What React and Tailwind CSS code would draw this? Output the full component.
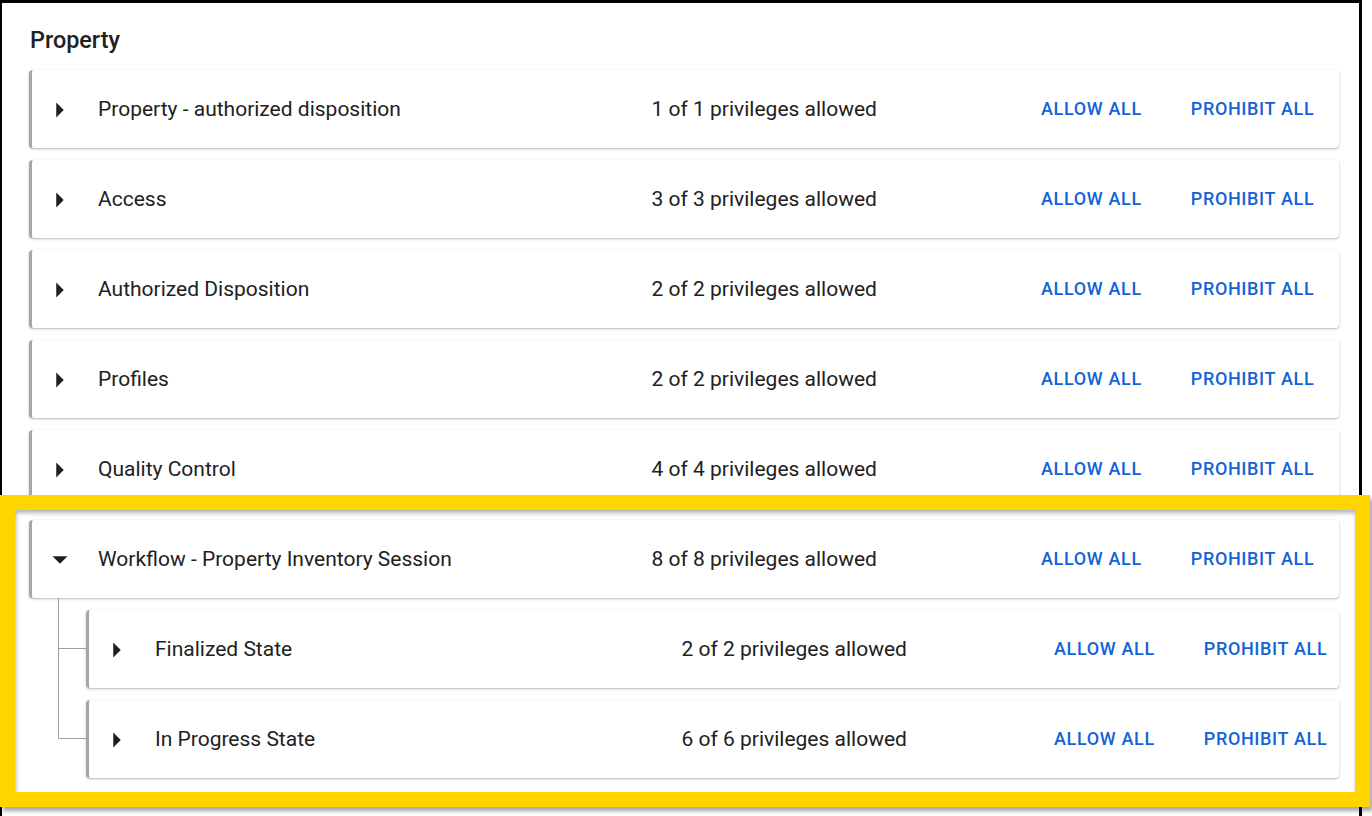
import React from "react";

const groups = [
  { title: "Property - authorized disposition", n: 1 },
  { title: "Access", n: 3 },
  { title: "Authorized Disposition", n: 2 },
  { title: "Profiles", n: 2 },
  { title: "Quality Control", n: 4 },
];

const children = [
  { title: "Finalized State", n: 2 },
  { title: "In Progress State", n: 6 },
];

function Arrow({ open }) {
  return (
    <svg width="16" height="16" viewBox="0 0 16 16" className="shrink-0">
      {open ? (
        <polygon points="0.5,4.25 15.5,4.25 8,11.75" fill="#1f1f1f" />
      ) : (
        <polygon points="4.25,0.5 11.75,8 4.25,15.5" fill="#1f1f1f" />
      )}
    </svg>
  );
}

function Row({ title, n, open }) {
  return (
    <div className="h-[78px] pt-[2px] bg-white rounded-[4px] border-l-[3px] border-[#a6a6a6] shadow-[0_1px_3px_rgba(0,0,0,0.22),0_1px_1px_rgba(0,0,0,0.08)] grid grid-cols-[47.4%_29.8%_1fr] items-center text-[21px] text-[#212121]">
      <div className="flex items-center pl-[20px]">
        <Arrow open={open} />
        <span className="ml-[30px] whitespace-nowrap">{title}</span>
      </div>
      <div className="whitespace-nowrap">
        {n} of {n} privileges allowed
      </div>
      <div className="flex items-center mb-[3px] gap-[49px] text-[18px] font-medium tracking-[0.65px] text-[#1363d6] whitespace-nowrap">
        <span>ALLOW ALL</span>
        <span>PROHIBIT ALL</span>
      </div>
    </div>
  );
}

export default function App() {
  return (
    <div
      className="relative w-[1372px] h-[816px] bg-white overflow-hidden"
      style={{ fontFamily: "Roboto, 'Liberation Sans', sans-serif" }}
    >
      <div className="w-[1362px] h-[816px] border-l-2 border-t-[3px] border-r-[3px] border-black pt-[23px] pl-[27px] pr-[20px]">
        <h2 className="text-[23.4px] leading-[28px] font-medium text-[#212121] ml-[1px]">
          Property
        </h2>
        <div className="mt-[16px] flex flex-col gap-[12px]">
          {groups.map((g) => (
            <Row key={g.title} title={g.title} n={g.n} />
          ))}
          <div>
            <Row title="Workflow - Property Inventory Session" n={8} open />
            <div className="flex flex-col">
              {children.map((c, i) => (
                <div key={c.title} className="flex">
                  <div className="ml-[29px] w-[28px] flex flex-col shrink-0">
                    <div className="h-[51px] border-l border-b border-[#a0a0a0]" />
                    <div
                      className={
                        i < children.length - 1
                          ? "flex-1 border-l border-[#a0a0a0]"
                          : "flex-1"
                      }
                    />
                  </div>
                  <div className="flex-1 pt-[12px]">
                    <Row title={c.title} n={c.n} />
                  </div>
                </div>
              ))}
            </div>
          </div>
        </div>
      </div>
      <div className="absolute left-0 top-[495px] w-[1370px] h-[312px] border-[15px] border-[#ffd500] shadow-[3px_4px_4px_rgba(0,0,0,0.35),inset_1px_3px_4px_rgba(0,0,0,0.3)] pointer-events-none" />
    </div>
  );
}
